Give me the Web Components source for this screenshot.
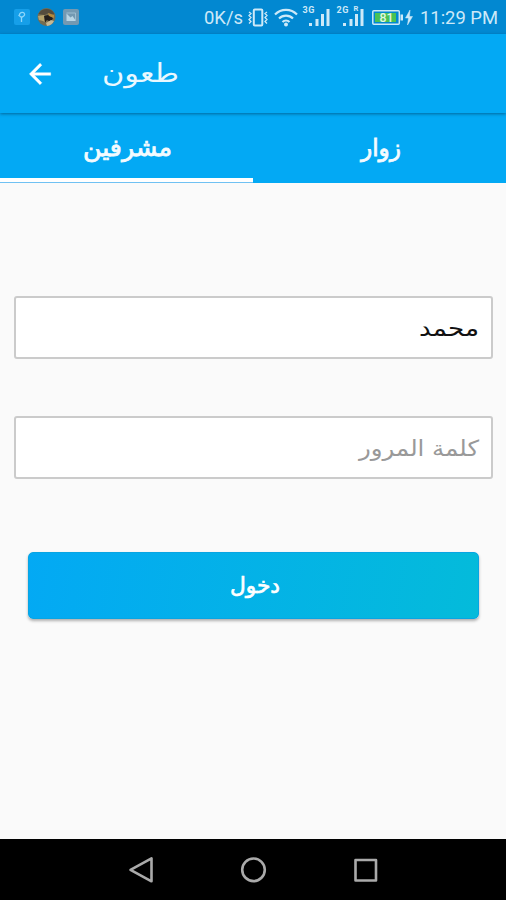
<!DOCTYPE html>
<html lang="ar">
<head>
<meta charset="UTF-8">
<meta name="viewport" content="width=device-width, initial-scale=1.0">
<title>طعون</title>
<style>
    body{
        margin: 0;
        background: #fafafa;
        font-family: "DejaVu Sans", sans-serif;
    }
</style>
</head>
<body>
<login-screen></login-screen>

<script>
// one line of text, stretched or narrowed to the given width
class FitText extends HTMLElement {
    constructor() {
        super();
        const shadowRoot = this.attachShadow({ mode: 'open' });
        shadowRoot.innerHTML = `
            <style>
                :host{
                    display: block;
                    flex: none;
                    direction: ltr;
                    white-space: nowrap;
                }
                span{
                    display: inline-block;
                    transform-origin: 0 50%;
                }
            </style>
            <span><slot></slot></span>
        `;
    }

    connectedCallback() {
        const width = Number(this.getAttribute("width"));
        const span = this.shadowRoot.querySelector("span");
        this.style.width = width + "px";
        const natural = span.getBoundingClientRect().width;
        if (natural > 0) span.style.transform = `scaleX(${width / natural})`;
    }
}

class StatusBar extends HTMLElement {
    constructor() {
        super();
        const shadowRoot = this.attachShadow({ mode: 'open' });
        shadowRoot.innerHTML = `
            <style>
                :host{
                    display: flex;
                    align-items: center;
                    height: 34px;
                    box-sizing: border-box;
                    padding: 0 8px 0 14px;
                    background: #0288d1;
                    color: #cde9f8;
                    font-family: Roboto, sans-serif;
                    font-size: 19px;
                }
                svg{
                    display: block;
                    flex: none;
                }
                .apps{
                    display: flex;
                    align-items: center;
                    gap: 7px;
                }
                .speed{
                    margin-left: auto;
                }
                .icons{
                    display: flex;
                    align-items: center;
                    margin: 0 7px 0 5px;
                }
                text{
                    font-family: Roboto, sans-serif;
                }
            </style>
            <div class="apps">
                <svg width="16" height="18" viewBox="0 0 16 18">
                    <rect y="1" width="16" height="16" rx="2" fill="#169fe9"/>
                    <path d="M5.500 7c0-4 6-3 5 0-.5 1.500-2 1.500-3 2.500V14M4.500 7l3 2.500" fill="none" stroke="#8ed6fa" stroke-width="1.300"/>
                </svg>
                <svg width="19" height="20" viewBox="0 0 19 20">
                    <circle cx="9.500" cy="10" r="9" fill="#756c51"/>
                    <path d="M1.500 7a9 9 0 0 1 16 0l-3 1-3-2-4 2z" fill="#554c3d"/>
                    <path d="M1 9l6-1 3 3-1 5-3-2-4-1z" fill="#b5a36d"/>
                    <path d="M7 9l4-1 5 3-2 4-4-2-2 3z" fill="#241f1c"/>
                    <path d="M9 16l5-3 3 1a9 9 0 0 1-7 5z" fill="#c5b895"/>
                    <path d="M11 6l6 2v3l-5-2z" fill="#b58a3c"/>
                </svg>
                <svg width="16" height="18" viewBox="0 0 16 18">
                    <rect y="1" width="16" height="16" rx="2" fill="#7399b2"/>
                    <path d="M3.500 5.500l4 4 2-1.500 3.500 5h-9.500z" fill="#b9d6e6"/>
                    <path d="M3.500 5h9v8" fill="none" stroke="#9dbdd1"/>
                </svg>
            </div>
            <fit-text class="speed" width="39">0K/s</fit-text>
            <div class="icons">
                <svg width="157" height="30" viewBox="248 2 157 30">
                    <g fill="none" stroke="#cde9f8">
                        <rect x="253.800" y="9.500" width="8.500" height="16" rx="1" stroke-width="2"/>
                        <path d="M249 12l2 1.500-2 2 2 2-2 2 2 2-2 2M267 12l-2 1.500 2 2-2 2 2 2-2 2 2 2" stroke-width="1.300"/>
                        <path d="M275 14.500a15.500 15.500 0 0 1 22 0M279 18.500a10 10 0 0 1 14 0M282.500 22a5 5 0 0 1 7 0" stroke-width="2.200"/>
                        <rect x="372.800" y="10.800" width="26.500" height="13.400" rx="1" stroke-width="1.500"/>
                    </g>
                    <g fill="#cde9f8">
                        <circle cx="286" cy="24.500" r="2"/>
                        <text x="302.500" y="13" font-size="9" font-weight="700" textLength="12">3G</text>
                        <path d="M309 23h3v3h-3zM315.500 19h3v7h-3zM321 14h3v12h-3zM326.500 9h3v17h-3z"/>
                        <text x="336.500" y="13" font-size="9" font-weight="700" textLength="12">2G</text>
                        <text x="353.500" y="11" font-size="7.500" font-weight="700">R</text>
                        <path d="M343 23h3v3h-3zM349.500 19h3v7h-3zM355 14h3v12h-3zM360.500 9h3v17h-3z"/>
                        <path d="M400.500 14.500h2.500v6h-2.500z"/>
                    </g>
                    <rect x="375" y="13" width="21" height="9" fill="#48c255"/>
                    <text x="379.500" y="21.800" font-size="12" font-weight="500" fill="#e1f6e4" textLength="14" lengthAdjust="spacingAndGlyphs">81</text>
                </svg>
                <svg width="8" height="30" viewBox="405 2 8 30">
                    <path d="M410 10l-4.500 8h3l-1 7 5-8.500h-3z" fill="#cde9f8" stroke="#cde9f8" stroke-width=".5"/>
                </svg>
            </div>
            <fit-text width="78">11:29 PM</fit-text>
        `;
    }
}

class AppBar extends HTMLElement {
    constructor() {
        super();
        const shadowRoot = this.attachShadow({ mode: 'open' });
        shadowRoot.innerHTML = `
            <style>
                :host{
                    display: flex;
                    align-items: center;
                    height: 79px;
                    box-sizing: border-box;
                    padding-left: 24px;
                    background: #03a9f4;
                    color: #e9f8ff;
                    position: relative;
                    z-index: 1;
                    box-shadow: 0 1px 3px rgba(0, 50, 80, .55);
                }
                svg{
                    display: block;
                    margin-right: 46px;
                }
                .title{
                    padding-bottom: 1px;
                    font-size: 26px;
                    line-height: 40px;
                }
            </style>
            <svg width="32" height="32" viewBox="0 0 24 24">
                <path d="M20 11H7.830l5.590-5.590L12 4l-8 8 8 8 1.410-1.410L7.830 13H20v-2z" fill="#fff" stroke="#fff" stroke-width=".3"/>
            </svg>
            <div class="title"><slot></slot></div>
        `;
    }
}

class TabBar extends HTMLElement {
    constructor() {
        super();
        const shadowRoot = this.attachShadow({ mode: 'open' });
        shadowRoot.innerHTML = `
            <style>
                :host{
                    display: flex;
                    height: 70px;
                    background: #03a9f4;
                }
                ::slotted(*){
                    flex: 1;
                    box-sizing: border-box;
                    padding: 5px 0 5px 2px;
                    display: flex;
                    align-items: center;
                    justify-content: center;
                    color: #f4fbff;
                    font-size: 24px;
                    -webkit-text-stroke: .8px #f4fbff;
                }
                ::slotted(.active){
                    background: linear-gradient(#fff 3.5px, #6fc1f3 3.5px, #6fc1f3 5px) 0 100% / 100% 5px no-repeat;
                }
            </style>
            <slot></slot>
        `;
    }
}

class TextField extends HTMLElement {
    constructor() {
        super();
        const shadowRoot = this.attachShadow({ mode: 'open' });
        shadowRoot.innerHTML = `
            <style>
                :host{
                    display: flex;
                    align-items: center;
                    height: 63px;
                    box-sizing: border-box;
                    padding: 2px 12px 0;
                    border: 2px solid #cbcbcb;
                    border-radius: 3px;
                    background: #fff;
                    color: #111;
                    font-size: 22px;
                }
                :host([empty]){
                    color: #999;
                }
            </style>
            <slot></slot>
        `;
    }
}

class SubmitButton extends HTMLElement {
    constructor() {
        super();
        const shadowRoot = this.attachShadow({ mode: 'open' });
        shadowRoot.innerHTML = `
            <style>
                :host{
                    display: flex;
                    align-items: center;
                    justify-content: center;
                    height: 67px;
                    box-sizing: border-box;
                    padding-left: 2px;
                    border: 1px solid #08a5e3;
                    border-radius: 5px;
                    background: linear-gradient(100deg, #03a9f4, #04bbda);
                    box-shadow: 0 2px 3px rgba(0, 0, 0, .3);
                    color: #fff;
                    font-size: 22px;
                    -webkit-text-stroke: .7px #fff;
                }
            </style>
            <slot></slot>
        `;
    }
}

class NavBar extends HTMLElement {
    constructor() {
        super();
        const shadowRoot = this.attachShadow({ mode: 'open' });
        shadowRoot.innerHTML = `
            <style>
                :host{
                    display: flex;
                    align-items: center;
                    justify-content: center;
                    gap: 84px;
                    height: 61px;
                    background: #000;
                }
                svg{
                    display: block;
                    fill: none;
                    stroke: #aaa;
                    stroke-width: 2.6;
                    stroke-linejoin: round;
                }
            </style>
            <svg width="28" height="28" viewBox="0 0 28 28"><path d="M3.500 13.800L24.500 2.300v23z"/></svg>
            <svg width="28" height="28" viewBox="0 0 28 28"><circle cx="14.500" cy="13.800" r="11.300"/></svg>
            <svg width="28" height="28" viewBox="0 0 28 28"><rect x="4.500" y="4" width="20.500" height="20.500"/></svg>
        `;
    }
}

class LoginScreen extends HTMLElement {
    constructor() {
        super();
        const shadowRoot = this.attachShadow({ mode: 'open' });
        shadowRoot.innerHTML = `
            <style>
                :host{
                    display: flex;
                    flex-direction: column;
                    width: 506px;
                    height: 900px;
                    overflow: hidden;
                    background: #fafafa;
                }
                .form{
                    flex: 1;
                    display: flex;
                    flex-direction: column;
                    gap: 57px;
                    padding: 113px 13px 0 14px;
                }
                submit-button{
                    margin: 16px 14px 0;
                }
            </style>
            <status-bar></status-bar>
            <app-bar><fit-text width="77">طعون</fit-text></app-bar>
            <tab-bar>
                <div class="active"><fit-text width="89">مشرفين</fit-text></div>
                <div><fit-text width="40">زوار</fit-text></div>
            </tab-bar>
            <div class="form">
                <text-field dir="rtl"><fit-text width="60">محمد</fit-text></text-field>
                <text-field dir="rtl" empty><fit-text width="120">كلمة المرور</fit-text></text-field>
                <submit-button><fit-text width="50">دخول</fit-text></submit-button>
            </div>
            <nav-bar></nav-bar>
        `;
    }
}

// containers first, so their styles are in place when fit-text measures
customElements.define('status-bar', StatusBar);
customElements.define('app-bar', AppBar);
customElements.define('tab-bar', TabBar);
customElements.define('text-field', TextField);
customElements.define('submit-button', SubmitButton);
customElements.define('nav-bar', NavBar);
customElements.define('login-screen', LoginScreen);
customElements.define('fit-text', FitText);
</script>
</body>
</html>
